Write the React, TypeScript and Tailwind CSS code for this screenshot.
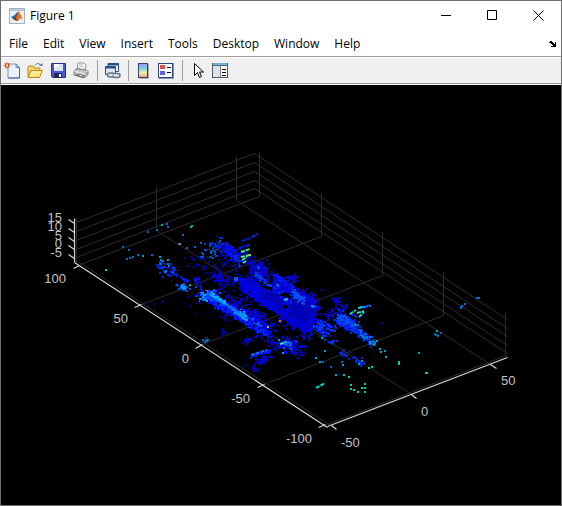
import type { ReactNode } from 'react';

const menus = ['File', 'Edit', 'View', 'Insert', 'Tools', 'Desktop', 'Window', 'Help'];

type Point = [number, number];
type Segment = [number, number, number, number];

const gridLines: Segment[] = [
  // left wall
  [76, 222, 254, 153],
  [76, 231, 254, 162],
  [76, 240, 254, 171],
  [76, 249, 254, 180],
  [76, 257, 254, 188],
  // right wall
  [254, 153, 507, 319],
  [254, 162, 507, 328],
  [254, 171, 507, 336],
  [254, 180, 507, 345],
  [254, 188, 507, 353],
  // verticals
  [76, 218, 76, 262],
  [156, 186, 156, 230],
  [236, 156, 236, 200],
  [259, 152, 259, 196],
  [321, 192, 321, 236],
  [382, 231, 382, 275],
  [443, 271, 443, 315],
  [505, 312, 505, 355],
  // floor
  [259, 196, 80, 264],
  [321, 236, 141, 304],
  [382, 275, 202, 344],
  [443, 315, 263, 384],
  [156, 230, 411, 394],
  [236, 200, 490, 364],
  [76, 260, 330, 425],
  [327, 424, 506, 355]
];

const axisLines: Segment[] = [
  [74, 218, 74, 262],
  [74, 262, 327, 427],
  [327, 426, 507, 357],
  [68, 219, 74, 223],
  [68, 228, 74, 232],
  [68, 237, 74, 241],
  [68, 245, 74, 249],
  [68, 254, 74, 258],
  [79, 265, 73, 268],
  [141, 304, 134, 307],
  [202, 344, 195, 348],
  [264, 384, 257, 387],
  [325, 424, 318, 427],
  [331, 425, 336, 429],
  [411, 394, 416, 398],
  [490, 364, 496, 368]
];

const labels: { x: number; y: number; text: string; anchor: 'start' | 'middle' | 'end' }[] = [
  { x: 62, y: 222, text: '15', anchor: 'end' },
  { x: 62, y: 231, text: '10', anchor: 'end' },
  { x: 62, y: 240, text: '5', anchor: 'end' },
  { x: 62, y: 248, text: '0', anchor: 'end' },
  { x: 62, y: 257, text: '-5', anchor: 'end' },
  { x: 66, y: 283, text: '100', anchor: 'end' },
  { x: 128, y: 323, text: '50', anchor: 'end' },
  { x: 189, y: 363, text: '0', anchor: 'end' },
  { x: 250, y: 403, text: '-50', anchor: 'end' },
  { x: 312, y: 443, text: '-100', anchor: 'end' },
  { x: 341, y: 447, text: '-50', anchor: 'start' },
  { x: 421, y: 416, text: '0', anchor: 'start' },
  { x: 501, y: 385, text: '50', anchor: 'start' }
];

// dense slabs of returns on both sides of the road
const slabs: { color: string; density: number; points: Point[] }[] = [
  {
    color: '#0000c4',
    density: 0.7,
    points: [[237, 280], [246, 276], [254, 280], [262, 288], [271, 292], [273, 272], [282, 278], [298, 290], [315, 299], [316, 312], [307, 322], [309, 331], [302, 332], [296, 327], [283, 317], [272, 309], [260, 303], [251, 297], [242, 291]]
  },
  {
    color: '#0000f0',
    density: 0.16,
    points: [[237, 280], [254, 280], [271, 292], [273, 272], [298, 290], [315, 299], [316, 312], [307, 331], [283, 317], [251, 297]]
  },
  {
    color: '#0000b4',
    density: 1.2,
    points: [[292, 299], [300, 295], [314, 302], [315, 311], [306, 321], [298, 322], [287, 313]]
  },
  {
    color: '#0000b4',
    density: 1,
    points: [[259, 294], [268, 292], [281, 298], [283, 309], [276, 311], [264, 304], [255, 298]]
  },
  {
    color: '#0008e8',
    density: 0.45,
    points: [[203, 290], [212, 290], [225, 300], [240, 306], [256, 313], [269, 329], [271, 336], [263, 334], [250, 328], [233, 316], [215, 306], [203, 300]]
  },
  {
    color: '#0000d8',
    density: 0.5,
    points: [[247, 263], [256, 265], [266, 265], [267, 275], [258, 275], [249, 270]]
  },
  {
    color: '#0018ff',
    density: 0.5,
    points: [[339, 313], [349, 317], [357, 324], [356, 331], [344, 329], [335, 322]]
  }
];

// [x1, y1, x2, y2, spread, count, color]
const clusters: [number, number, number, number, number, number, string][] = [
  [160, 265, 174, 273, 5, 46, '#0028e8'],
  [160, 262, 172, 268, 5, 14, '#0080d0'],
  [170, 271, 188, 281, 1, 35, '#0018e8'],
  [178, 284, 187, 288, 3, 36, '#0050f0'],
  [180, 285, 185, 288, 1, 14, '#00a0ff'],
  [195, 278, 202, 294, 2, 28, '#0010e0'],
  [200, 293, 214, 297, 5, 70, '#0050ff'],
  [202, 294, 210, 292, 4, 18, '#00a8e8'],
  [204, 252, 216, 248, 7, 30, '#0050c0'],
  [212, 244, 229, 247, 5, 46, '#0028d8'],
  [222, 248, 238, 257, 6, 95, '#0000d8'],
  [226, 250, 236, 258, 5, 46, '#0010f8'],
  [234, 256, 239, 266, 2, 24, '#0028e8'],
  [213, 275, 229, 279, 5, 62, '#0000d0'],
  [192, 262, 207, 268, 7, 24, '#0000b8'],
  [214, 262, 232, 270, 7, 22, '#0000c0'],
  [214, 288, 239, 284, 8, 40, '#0000b8'],
  [225, 297, 245, 306, 5, 40, '#0000c0'],
  [243, 280, 264, 277, 7, 85, '#0000b8'],
  [250, 262, 264, 276, 7, 100, '#0000c0'],
  [233, 278, 236, 279, 2, 16, '#0058ff'],
  [254, 272, 270, 285, 2, 34, '#0038f8'],
  [274, 275, 295, 289, 2, 60, '#0018f8'],
  [292, 292, 304, 300, 3, 60, '#0048f0'],
  [281, 281, 297, 276, 3, 46, '#0000c0'],
  [302, 292, 316, 302, 4, 56, '#0000d8'],
  [280, 315, 308, 331, 6, 110, '#0000d0'],
  [312, 304, 320, 323, 5, 40, '#0000d0'],
  [239, 280, 275, 308, 4, 140, '#0000e8'],
  [209, 294, 260, 325, 1, 140, '#0058ff'],
  [207, 293, 239, 313, 2, 100, '#0040ff'],
  [214, 303, 267, 334, 2, 120, '#0020ff'],
  [236, 311, 245, 318, 3, 36, '#00a0ff'],
  [212, 294, 226, 302, 1, 30, '#00a8ff'],
  [248, 308, 268, 328, 6, 120, '#0000d0'],
  [224, 311, 226, 315, 4, 14, '#0000c0'],
  [220, 329, 223, 333, 2, 12, '#0000a8'],
  [243, 341, 262, 334, 2, 30, '#0000c8'],
  [250, 356, 269, 350, 1, 40, '#0018ff'],
  [252, 366, 268, 354, 3, 50, '#0000d0'],
  [250, 367, 257, 370, 2, 8, '#0000c0'],
  [278, 343, 294, 346, 6, 110, '#0008d8'],
  [282, 341, 292, 345, 3, 30, '#0060e0'],
  [291, 347, 305, 350, 6, 46, '#0000c8'],
  [266, 340, 278, 346, 4, 30, '#0000b8'],
  [308, 318, 327, 330, 5, 75, '#0000e8'],
  [314, 325, 335, 329, 4, 56, '#0038f0'],
  [326, 316, 343, 306, 3, 42, '#0000d0'],
  [334, 299, 337, 300, 3, 32, '#0000c0'],
  [337, 316, 355, 325, 5, 90, '#0028f8'],
  [336, 314, 349, 323, 3, 44, '#0050f8'],
  [350, 325, 373, 344, 3, 80, '#0028f0'],
  [353, 325, 374, 344, 3, 34, '#0078d0'],
  [360, 306, 368, 305, 1, 10, '#0070ff'],
  [319, 333, 334, 344, 2, 24, '#0030d8'],
  [340, 351, 363, 363, 3, 38, '#0028e0'],
  [188, 291, 200, 312, 7, 12, '#0000a8'],
  [203, 338, 206, 340, 2, 9, '#0068c8'],
  [273, 288, 292, 302, 2, 26, '#0020f8']
];

// short straight runs
const streaks: [number, number, number, number, string][] = [
  [242, 241, 251, 238, '#0020e8'],
  [252, 237, 258, 234, '#0030f0'],
  [239, 248, 245, 246, '#0020e0'],
  [246, 246, 250, 245, '#0020e0'],
  [241, 252, 250, 249, '#40f0a0'],
  [241, 257, 250, 255, '#70f080'],
  [242, 260, 247, 257, '#38e8b0'],
  [243, 263, 246, 261, '#40e0a0'],
  [209, 294, 227, 305, '#00b0f0'],
  [228, 306, 243, 316, '#1080ff'],
  [251, 355, 267, 350, '#2060ff'],
  [276, 284, 280, 287, '#1070f0'],
  [292, 291, 303, 298, '#0060f0'],
  [350, 314, 356, 310, '#20d0d8'],
  [358, 308, 364, 307, '#20d0c0'],
  [357, 313, 364, 311, '#20e8c0'],
  [359, 317, 364, 312, '#20c0e0'],
  [364, 308, 369, 305, '#0060ff'],
  [316, 388, 325, 383, '#00e0d0'],
  [284, 300, 288, 299, '#30c8c8'],
  [280, 344, 286, 342, '#40e0c0'],
  [311, 306, 316, 307, '#00a0f0'],
  [258, 266, 259, 269, '#0060ff']
];

// isolated returns
const singles: [string, Point[]][] = [
  ['#00a8b0', [[161, 224], [190, 226], [191, 225], [142, 255], [159, 256], [167, 259], [189, 284], [315, 357], [342, 364], [324, 350], [436, 330], [418, 352]]],
  ['#006cc8', [[166, 223], [167, 226], [147, 231], [156, 229], [182, 234], [178, 243], [122, 246], [128, 249], [126, 258], [129, 257], [132, 256], [137, 254], [151, 254], [159, 263], [322, 361], [435, 334], [440, 332], [437, 335], [434, 333], [330, 366], [341, 361]]],
  ['#0068e0', [[460, 307], [461, 305], [464, 303], [476, 297], [478, 297], [460, 306], [186, 247], [194, 246], [200, 242], [210, 252]]],
  ['#00d0a0', [[426, 372], [343, 374], [348, 376], [350, 384], [350, 388], [353, 389], [357, 391], [364, 387], [364, 391], [364, 383], [361, 387], [105, 269], [425, 372], [398, 363], [398, 361], [368, 367], [371, 366]]],
  ['#00a0c8', [[379, 348], [384, 350], [380, 351], [373, 344], [369, 341], [385, 356], [376, 340], [361, 360], [358, 363], [335, 374], [319, 361], [282, 352], [321, 337], [278, 339]]],
  ['#0000b0', [[321, 289], [153, 303], [161, 301], [381, 322], [188, 296], [205, 291], [197, 264], [213, 265], [306, 288], [257, 368], [243, 365], [324, 333]]],
  ['#c8c020', [[249, 254], [267, 326]]],
  ['#e07010', [[279, 320], [179, 243]]]
];

function createRandom(seed: number) {
  let value = seed;
  return () => {
    value = (value * 16807) % 2147483647;
    return value / 2147483647;
  };
}

function isInside(x: number, y: number, points: Point[]) {
  let inside = false;
  for (let i = 0, j = points.length - 1; i < points.length; j = i++) {
    const [xi, yi] = points[i];
    const [xj, yj] = points[j];
    if (yi > y !== yj > y && x < ((xj - xi) * (y - yi)) / (yj - yi) + xi) {
      inside = !inside;
    }
  }
  return inside;
}

const dot = (x: number, y: number, size = 2) => `M${Math.round(x)} ${Math.round(y)}h${size}v${size}h-${size}z`;

function buildCloud() {
  const random = createRandom(4217);
  const layers: { color: string; d: string }[] = [];

  slabs.forEach(({ color, density, points }) => {
    const xs = points.map((p) => p[0]);
    const ys = points.map((p) => p[1]);
    const minX = Math.min(...xs);
    const minY = Math.min(...ys);
    const width = Math.max(...xs) - minX;
    const height = Math.max(...ys) - minY;
    let d = '';
    for (let i = 0; i < width * height * density; i++) {
      const x = minX + random() * width;
      const y = minY + random() * height;
      if (isInside(x, y, points)) d += dot(x, y);
    }
    layers.push({ color, d });
  });

  clusters.forEach(([x1, y1, x2, y2, spread, count, color]) => {
    let d = '';
    for (let i = 0; i < count; i++) {
      const t = random();
      const dx = (random() + random() + random() - 1.5) * spread * 1.4;
      const dy = (random() + random() + random() - 1.5) * spread * 1.4;
      d += dot(x1 + (x2 - x1) * t + dx, y1 + (y2 - y1) * t + dy, random() > 0.3 ? 2 : 1);
    }
    layers.push({ color, d });
  });

  return layers;
}

const cloud = buildCloud();

function PointCloudPlot() {
  return (
    <svg viewBox="1 85 560 420" className="block w-full h-auto" role="img" aria-label="3-D point cloud">
      <g stroke="#2c2c2c" strokeWidth="1">
        {gridLines.map(([x1, y1, x2, y2], index) => (
          <line key={index} x1={x1 + 0.5} y1={y1 + 0.5} x2={x2 + 0.5} y2={y2 + 0.5} />
        ))}
      </g>
      <g shapeRendering="crispEdges">
        {cloud.map(({ color, d }, index) => (
          <path key={index} d={d} fill={color} />
        ))}
        {/* gaps behind parked vehicles */}
        <path d="M279 295l5-3 6 2 1 4-7-1zM284 305l5 1-2 3-4-1z" fill="#000" />
        {singles.map(([color, points]) => (
          <path key={color} d={points.map(([x, y]) => dot(x, y)).join('')} fill={color} />
        ))}
      </g>
      <g strokeWidth="2" strokeDasharray="4 1">
        {streaks.map(([x1, y1, x2, y2, color], index) => (
          <line key={index} x1={x1} y1={y1} x2={x2} y2={y2} stroke={color} />
        ))}
      </g>
      <g stroke="#d8d8d8" strokeWidth="1.2">
        {axisLines.map(([x1, y1, x2, y2], index) => (
          <line key={index} x1={x1 + 0.5} y1={y1 + 0.5} x2={x2 + 0.5} y2={y2 + 0.5} />
        ))}
      </g>
      <g fill="#c4c4c4" fontSize="13" fontFamily="'Liberation Sans', Arial, sans-serif">
        {labels.map(({ x, y, text, anchor }) => (
          <text key={`${x}-${y}`} x={x} y={y} textAnchor={anchor}>
            {text}
          </text>
        ))}
      </g>
    </svg>
  );
}

function ToolButton({ label, children }: { label: string; children: ReactNode }) {
  return (
    <button type="button" aria-label={label} className="flex w-[23px] h-6 items-center justify-center">
      <svg viewBox="0 0 17 17" width="17" height="17" className="overflow-visible">
        {children}
      </svg>
    </button>
  );
}

function Separator() {
  return (
    <div className="flex w-2 justify-center">
      <div className="w-px h-[21px] bg-[#a0a0a0]" />
    </div>
  );
}

function MatlabLogo() {
  return (
    <svg viewBox="0 0 16 16" width="16" height="16" aria-hidden="true">
      <rect x="0.5" y="0.5" width="15" height="15" fill="#eceff2" stroke="#a4b0bc" />
      <rect x="1" y="1" width="14" height="2" fill="#b4c8dc" />
      <path d="M2 9l3-1.500 3-3 1.500-1-2 6-2.500 2.500z" fill="#2a6a9c" />
      <path d="M9.500 3.500c-1 2-2 5-4.500 8l1.500 1 2 0.500 2-2z" fill="#9c2810" />
      <path d="M9.500 3.500c1.500 0.500 2.500 5 4.500 8l-3-1.500-2.500 3c-0.500-1 0-1.500-1.500-2.500z" fill="#e8701c" />
    </svg>
  );
}

function TitleBar() {
  const buttonClass = 'flex w-[46px] h-full items-center justify-center';

  return (
    <header className="flex h-[29px] items-center pl-2">
      <MatlabLogo />
      <h1 className="ml-[5px] flex-1 text-xs">Figure 1</h1>
      <button type="button" aria-label="Minimize" className={buttonClass}>
        <svg width="11" height="11" stroke="#000">
          <path d="M0 5.500h10" />
        </svg>
      </button>
      <button type="button" aria-label="Maximize" className={buttonClass}>
        <svg width="11" height="11" fill="none" stroke="#000">
          <path d="M0.500 0.500h9v9h-9z" />
        </svg>
      </button>
      <button type="button" aria-label="Close" className={buttonClass}>
        <svg width="11" height="11" stroke="#000">
          <path d="M0.500 0.500l10 10M10.500 0.500l-10 10" />
        </svg>
      </button>
    </header>
  );
}

function MenuBar() {
  return (
    <nav className="flex h-[26px] items-center justify-between pt-0.5 pl-2 pr-1">
      <div className="flex gap-[15px] text-xs">
        {menus.map((menu) => (
          <button key={menu} type="button">
            {menu}
          </button>
        ))}
      </div>
      <button type="button" aria-label="Dock figure">
        <svg width="8" height="7" shapeRendering="crispEdges">
          <path d="M1 0h2v1h1v1h1v1h1v-2h1v5h-5v-1h2v-1h-1v-1h-1v-1h-2v-1h1z" fill="#000" />
        </svg>
      </button>
    </nav>
  );
}

function ToolBar() {
  return (
    <div className="border-b border-white">
      <div role="toolbar" className="flex h-7 items-center border-y border-[#a0a0a0] bg-[#f0f0f0] shadow-[inset_0_1px_0_#fff]">
        <ToolButton label="New Figure">
          <path d="M4 2h8l3.500 3.500v10.500h-11.500z" fill="#eaf3ff" stroke="#7a96c0" />
          <path d="M15.500 6v10h-11" fill="none" stroke="#44659a" />
          <path d="M12 2v3.500h3.500z" fill="#b8d0f0" stroke="#6484b4" />
          <path d="M3 0v7M-0.500 3.500h7M0.500 1l5 5M5.500 1l-5 5" stroke="#e87850" />
          <rect x="1.500" y="2" width="3" height="3" fill="#fff0a0" stroke="#dc4c18" />
        </ToolButton>
        <ToolButton label="Open File">
          <path d="M1 15V5l1-1h4l1 2h6v3" fill="#f8d868" stroke="#b88818" />
          <path d="M1 15.500l3-7h11.500l-3 7z" fill="#ffe880" stroke="#b88818" />
          <path d="M5 10h8.500" stroke="#fff8c8" />
          <path d="M8 3.500c1.500-2.500 4-2.500 6 0" fill="none" stroke="#507090" />
          <path d="M12 4h3.500V1z" fill="#507090" />
        </ToolButton>
        <ToolButton label="Save Figure">
          <path d="M1.500 1.500h14v14h-13l-1-1z" fill="#4858d0" stroke="#28308c" />
          <rect x="4" y="2" width="9" height="7" fill="#d8e4f8" />
          <path d="M4 2h6l-6 5z" fill="#fff" />
          <rect x="4" y="11" width="8" height="5" fill="#20285c" />
          <rect x="9" y="12" width="2" height="3" fill="#fff" />
        </ToolButton>
        <ToolButton label="Print Figure">
          <path d="M4 7l1-6h6l2 2-1 5z" fill="#fff" stroke="#909090" />
          <path d="M6 3h4M6 5h5" stroke="#a8b8d0" />
          <path d="M1 9l3-2.500 11 2v4l-4 3.500-10-3z" fill="#c4c4c4" stroke="#787878" />
          <path d="M1 9l10 3 4-3.500" fill="none" stroke="#f4f4f4" />
          <path d="M3 13l7 2 2-1-6-2z" fill="#fff" stroke="#686868" />
          <path d="M12 11h2" stroke="#50a050" />
        </ToolButton>
        <Separator />
        <ToolButton label="Link Plot">
          <path d="M4 1.500h10.500v8H4z" fill="#fff" stroke="#284c84" />
          <path d="M4 2.500h10.500" stroke="#284c84" strokeWidth="2" />
          <path d="M1.500 4.500h10v8h-10z" fill="#dce8f8" stroke="#284c84" />
          <path d="M1.500 5.500h10" stroke="#284c84" strokeWidth="2" />
          <rect x="3.500" y="11" width="7" height="4" rx="2" fill="#d8e0e8" stroke="#607890" strokeWidth="1.500" />
          <rect x="9" y="11.500" width="7" height="4" rx="2" fill="#d8e0e8" stroke="#607890" strokeWidth="1.500" />
          <path d="M8 13h4" stroke="#e8f0f8" />
        </ToolButton>
        <Separator />
        <ToolButton label="Insert Colorbar">
          <defs>
            <linearGradient id="colorbar" x1="0" y1="0" x2="0" y2="1">
              <stop offset="0" stopColor="#a098f0" />
              <stop offset="0.35" stopColor="#78d0e8" />
              <stop offset="0.65" stopColor="#f0f0a0" />
              <stop offset="1" stopColor="#f09878" />
            </linearGradient>
          </defs>
          <path d="M13.500 2v14.500h-9" fill="none" stroke="#a8acb4" />
          <rect x="3.500" y="1.500" width="9" height="14" fill="url(#colorbar)" stroke="#2c4478" />
        </ToolButton>
        <ToolButton label="Insert Legend">
          <path d="M15.500 1v15.500H1" fill="none" stroke="#8894a8" />
          <rect x="0.500" y="1.500" width="14" height="14" fill="#fff" stroke="#2c4478" />
          <rect x="2" y="3" width="5" height="4" fill="#e05050" />
          <rect x="2" y="9" width="5" height="4" fill="#6060e0" />
          <path d="M9 5.500h4M9 10.500h4" stroke="#000" />
        </ToolButton>
        <Separator />
        <ToolButton label="Edit Plot">
          <path d="M5.500 1.500v12l3-3 2 5 2-1-2-4.500h4z" fill="#fff" stroke="#000" />
        </ToolButton>
        <ToolButton label="Open Property Inspector">
          <rect x="0.500" y="1.500" width="15" height="14" fill="#dce4ea" stroke="#505860" />
          <rect x="1" y="1" width="14" height="2" fill="#70b0dc" />
          <path d="M0 3.500h16" stroke="#506878" />
          <path d="M8.500 3.500v12" stroke="#788088" />
          <rect x="9" y="4" width="6" height="11" fill="#f8f8f8" />
          <path d="M10 7.500h4M10 10.500h4M10 13.500h4" stroke="#000" />
        </ToolButton>
      </div>
    </div>
  );
}

export default function App() {
  return (
    <div className="flex min-h-screen flex-col border border-[#6e6e6e] bg-white font-['Open_Sans',sans-serif] text-black">
      <TitleBar />
      <MenuBar />
      <ToolBar />
      <main className="flex-1 bg-black">
        <PointCloudPlot />
      </main>
    </div>
  );
}
